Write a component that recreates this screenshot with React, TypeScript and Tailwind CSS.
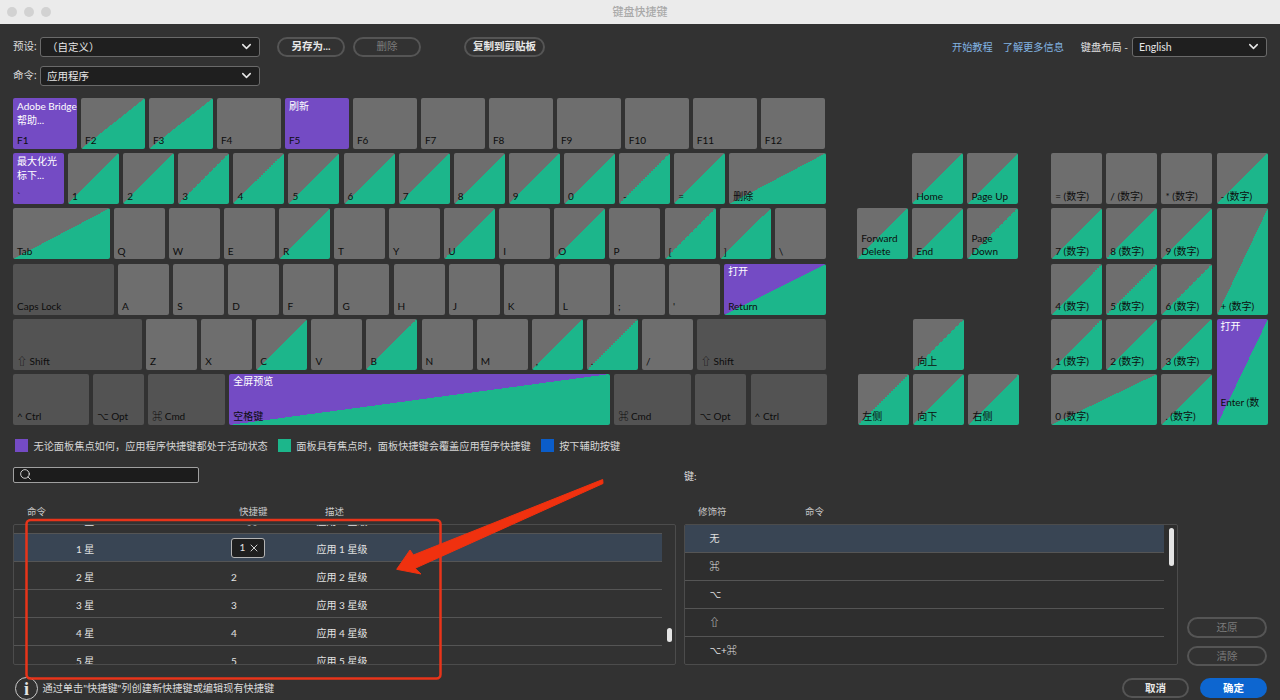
import React from "react";
import { ChevronDown, Search, X } from "lucide-react";

type Kind = "g" | "d" | "p" | "gt" | "pt";
type KeyDef = { l?: React.ReactNode; t?: React.ReactNode; k?: Kind; w?: string; c?: string };

const kinds: Record<Kind, string> = {
  g: "bg-[#6e6e6e]",
  d: "bg-[#535353]",
  p: "bg-[#744bc4]",
  gt: "bg-[linear-gradient(to_bottom_right,#6e6e6e_50%,#1cb68b_50%)]",
  pt: "bg-[linear-gradient(to_bottom_right,#744bc4_50%,#1cb68b_50%)]",
};

function Key({ l, t, k = "g", w = "w-[51px]", c = "" }: KeyDef) {
  return (
    <div className={`flex shrink-0 flex-col justify-between overflow-hidden rounded-[2px] px-[4px] pt-[0.5px] pb-[2px] ${kinds[k]} ${w} ${c}`}>
      <div className="whitespace-nowrap text-[10px] leading-[14px] text-white">{t}</div>
      <div className="whitespace-nowrap text-[10px] leading-[12.6px] text-[#0d0d0d]">{l}</div>
    </div>
  );
}

function Row({ keys, gap = "gap-[4.1px]" }: { keys: KeyDef[]; gap?: string }) {
  return (
    <div className={`flex h-[51px] ${gap}`}>
      {keys.map((d, i) => (
        <Key key={i} {...d} />
      ))}
    </div>
  );
}

const gk = (s: string): KeyDef => ({ l: s, k: "gt" });
const pk = (s: string): KeyDef => ({ l: s });
const FW = "w-[64.3px]";

const row1: KeyDef[] = [
  { t: <>Adobe Bridge<br />帮助...</>, l: "F1", k: "p", w: FW },
  { l: "F2", k: "gt", w: FW },
  { l: "F3", k: "gt", w: FW },
  { l: "F4", w: FW },
  { t: "刷新", l: "F5", k: "p", w: FW },
  { l: "F6", w: FW },
  { l: "F7", w: FW },
  { l: "F8", w: FW },
  { l: "F9", w: FW },
  { l: "F10", w: FW },
  { l: "F11", w: FW },
  { l: "F12", w: FW },
];
const row2: KeyDef[] = [
  { t: <>最大化光<br />标下...</>, l: "`", k: "p" },
  ...["1", "2", "3", "4", "5", "6", "7", "8", "9", "0", "-", "="].map(gk),
  { l: "删除", k: "gt", w: "w-[96.7px]" },
];
const row3: KeyDef[] = [
  { l: "Tab", k: "gt", w: "w-[96.5px]" },
  pk("Q"), pk("W"), pk("E"), gk("R"), pk("T"), pk("Y"), gk("U"), pk("I"), gk("O"), pk("P"), gk("["), gk("]"), pk("\\"),
];
const row4: KeyDef[] = [
  { l: "Caps Lock", k: "d", w: "w-[101px]" },
  ...["A", "S", "D", "F", "G", "H", "J", "K", "L", ";", "'"].map(pk),
  { t: "打开", l: "Return", k: "pt", w: "w-[101.8px]" },
];
const row5: KeyDef[] = [
  { l: "⇧ Shift", k: "d", w: "w-[129px]" },
  pk("Z"), pk("X"), gk("C"), pk("V"), gk("B"), pk("N"), pk("M"), gk(","), gk("."), pk("/"),
  { l: "⇧ Shift", k: "d", w: "w-[129px]" },
];
const row6: KeyDef[] = [
  { l: "^ Ctrl", k: "d", w: "w-[76px]" },
  { l: "⌥ Opt", k: "d" },
  { l: "⌘ Cmd", k: "d", w: "w-[77px]" },
  { t: "全屏预览", l: "空格键", k: "pt", w: "w-[381px]" },
  { l: "⌘ Cmd", k: "d", w: "w-[77px]" },
  { l: "⌥ Opt", k: "d" },
  { l: "^ Ctrl", k: "d", w: "w-[76px]" },
];

function GridKey(d: KeyDef) {
  return <Key {...d} w="w-auto" />;
}

function Select({ text, w }: { text: string; w: string }) {
  return (
    <div className={`flex h-[20.5px] items-center justify-between rounded-[3px] border border-[#6a6a6a] bg-[#1f1f1f] pr-[5px] pl-[6px] text-[10.5px] text-[#e6e6e6] ${w}`}>
      <span className="pt-[2px]">{text}</span>
      <ChevronDown size={15} strokeWidth={2.4} className="text-[#e8e8e8]" />
    </div>
  );
}

function Pill({ text, w, dim }: { text: string; w: string; dim?: boolean }) {
  return (
    <div className={`flex h-[20.5px] items-center justify-center rounded-full border-2 border-[#555555] pt-px text-[10.5px] ${dim ? "text-[#7c7c7c]" : "font-semibold text-[#e8e8e8]"} ${w}`}>
      {text}
    </div>
  );
}

function Legend({ color, text, ml }: { color: string; text: string; ml: string }) {
  return (
    <>
      <div className={`h-[13px] w-[13px] ${color} ${ml}`} />
      <span className="ml-[5.5px] pt-[2px] text-[10.2px] text-[#d6d6d6]">{text}</span>
    </>
  );
}

function LeftRow({ n, s, d, sel, box, sc = "" }: { n: string; s?: string; d: string; sel?: boolean; box?: boolean; sc?: string }) {
  return (
    <div className={`flex h-[28px] shrink-0 items-center border-b border-[#555555] pt-[3px] text-[10px] text-[#e2e2e2] ${sel ? "bg-[#394554]" : ""}`}>
      <span className="w-[217px] pl-[62px]">{n}</span>
      <span className={`w-[85.5px] ${sc}`}>
        {box ? (
          <span className="-mt-[3px] flex h-[20.5px] w-[33.5px] items-center justify-between rounded-[3px] border border-[#b4b4b4] bg-[#1f1f1f] pr-[3.5px] pl-[7.5px]">
            1
            <X size={12} strokeWidth={1.8} />
          </span>
        ) : (
          s
        )}
      </span>
      <span>{d}</span>
    </div>
  );
}

function ModRow({ t, sel }: { t: string; sel?: boolean }) {
  return (
    <div className={`flex h-[28px] shrink-0 items-center border-b border-[#555555] pl-[24.5px] text-[10px] text-[#e2e2e2] ${sel ? "bg-[#394554]" : ""}`}>
      {t}
    </div>
  );
}

export default function App() {
  return (
    <div className="relative h-[700px] w-[1280px] overflow-hidden bg-[#323232] font-['Lato','Noto_Sans_CJK_SC','DejaVu_Sans',sans-serif]">
      {/* title bar */}
      <div className="relative flex h-[24px] items-center justify-center bg-[#ebebeb]">
        <div className="absolute top-[7px] left-[7px] flex gap-[7px]">
          <div className="h-[10px] w-[10px] rounded-full bg-[#d2d2d2]" />
          <div className="h-[10px] w-[10px] rounded-full bg-[#d2d2d2]" />
          <div className="h-[10px] w-[10px] rounded-full bg-[#d2d2d2]" />
        </div>
        <span className="text-[11px] font-medium text-[#a9a9a9]">键盘快捷键</span>
      </div>

      {/* controls */}
      <div className="mt-[12.5px] flex items-center pr-[13px] pl-[13px]">
        <span className="w-[27px] pt-px text-[10.5px] text-[#dcdcdc]">预设:</span>
        <Select text="（自定义）" w="w-[220px]" />
        <Pill text="另存为..." w="w-[68px] ml-[17px]" />
        <Pill text="删除" w="w-[68px] ml-[8px]" dim />
        <Pill text="复制到剪贴板" w="w-[81px] ml-[43px]" />
        <span className="ml-auto pt-px text-[10.2px] text-[#82b4e2]">开始教程</span>
        <span className="ml-[10px] pt-px text-[10.2px] text-[#82b4e2]">了解更多信息</span>
        <span className="ml-[17px] pt-px text-[10.2px] text-[#e0e0e0]">键盘布局 -</span>
        <Select text="English" w="w-[135px] ml-[4px]" />
      </div>
      <div className="mt-[8.5px] flex items-center pl-[13px]">
        <span className="w-[27px] pt-px text-[10.5px] text-[#dcdcdc]">命令:</span>
        <Select text="应用程序" w="w-[220px]" />
      </div>

      {/* keyboard */}
      <div className="mt-[12px] flex pl-[13px]">
        <div className="flex flex-col gap-[4.2px]">
          <Row keys={row1} gap="gap-[3.7px]" />
          <Row keys={row2} />
          <Row keys={row3} />
          <Row keys={row4} />
          <Row keys={row5} />
          <Row keys={row6} />
        </div>
        <div className="ml-[30.7px] grid grid-cols-[repeat(3,51px)] grid-rows-[repeat(6,51px)] gap-x-[4.1px] gap-y-[4.2px]">
          <div className="col-span-3" />
          <div />
          <GridKey l="Home" k="gt" />
          <GridKey l="Page Up" k="gt" />
          <GridKey l={<>Forward<br />Delete</>} k="gt" />
          <GridKey l="End" k="gt" />
          <GridKey l={<>Page<br />Down</>} k="gt" />
          <div className="col-span-3" />
          <div />
          <GridKey l="向上" k="gt" c="ml-px -mr-px" />
          <div />
          <GridKey l="左侧" k="gt" c="ml-px -mr-px" />
          <GridKey l="向下" k="gt" c="ml-px -mr-px" />
          <GridKey l="右侧" k="gt" c="ml-px -mr-px" />
        </div>
        <div className="ml-[32.8px] grid grid-cols-[repeat(4,51px)] grid-rows-[repeat(6,51px)] gap-x-[4.1px] gap-y-[4.2px]">
          <div className="col-span-4" />
          <GridKey l="= (数字)" />
          <GridKey l="/ (数字)" />
          <GridKey l="* (数字)" />
          <GridKey l="- (数字)" k="gt" />
          <GridKey l="7 (数字)" k="gt" />
          <GridKey l="8 (数字)" k="gt" />
          <GridKey l="9 (数字)" k="gt" />
          <GridKey l="+ (数字)" k="gt" c="row-span-2" />
          <GridKey l="4 (数字)" k="gt" />
          <GridKey l="5 (数字)" k="gt" />
          <GridKey l="6 (数字)" k="gt" />
          <GridKey l="1 (数字)" k="gt" />
          <GridKey l="2 (数字)" k="gt" />
          <GridKey l="3 (数字)" k="gt" />
          <GridKey t="打开" l={<span className="mb-[14px] block">Enter (数</span>} k="pt" c="row-span-2" />
          <GridKey l="0 (数字)" k="gt" c="col-span-2" />
          <GridKey l=". (数字)" k="gt" />
        </div>
      </div>

      {/* legend */}
      <div className="mt-[14px] flex h-[13px] items-center">
        <Legend color="bg-[#744bc4]" text="无论面板焦点如何，应用程序快捷键都处于活动状态" ml="ml-[15px]" />
        <Legend color="bg-[#1cb68b]" text="面板具有焦点时，面板快捷键会覆盖应用程序快捷键" ml="ml-[10px]" />
        <Legend color="bg-[#0b5dc9]" text="按下辅助按键" ml="ml-[10px]" />
      </div>

      {/* lower section */}
      <div className="mt-[15px] flex pl-[13px]">
        <div className="w-[662.5px] shrink-0">
          <div className="flex h-[16px] w-[186px] items-center rounded-[2px] border border-[#a0a0a0] bg-[#1c1c1c] pl-[5px]">
            <Search size={13} strokeWidth={1.6} className="text-[#e6e6e6]" />
          </div>
          <div className="mt-[21px] flex h-[14px] items-center pt-[2px] text-[9.5px] text-[#c8c8c8]">
            <span className="ml-[14px] w-[212px]">命令</span>
            <span className="w-[86px]">快捷键</span>
            <span>描述</span>
          </div>
          <div className="mt-[6px] flex h-[141.5px] overflow-hidden rounded-[2px] border border-[#4c4c4c]">
            <div className="flex w-[647.5px] flex-col">
              <div className="-mt-[18.5px] flex flex-col">
                <LeftRow n="0 星" s="⌘+0" d="应用 0 星级" sc="pl-[16px]" />
                <LeftRow n="1 星" d="应用 1 星级" sel box />
                <LeftRow n="2 星" s="2" d="应用 2 星级" />
                <LeftRow n="3 星" s="3" d="应用 3 星级" />
                <LeftRow n="4 星" s="4" d="应用 4 星级" />
                <LeftRow n="5 星" s="5" d="应用 5 星级" />
              </div>
            </div>
            <div className="pt-[103px] pl-[5px]">
              <div className="h-[14px] w-[5px] rounded-full bg-[#e4e4e4]" />
            </div>
          </div>
        </div>

        <div className="ml-[8.5px]">
          <div className="flex h-[16px] items-center pt-[3px] text-[10px] text-[#dcdcdc]">键:</div>
          <div className="mt-[21px] flex h-[14px] items-center pt-[2px] pl-[14px] text-[9.5px] text-[#c8c8c8]">
            <span className="w-[107px]">修饰符</span>
            <span>命令</span>
          </div>
          <div className="mt-[6px] flex items-end">
            <div className="flex h-[141.5px] w-[493.5px] overflow-hidden rounded-[2px] border border-[#4c4c4c] bg-[#2e2e2e]">
              <div className="flex w-[479px] flex-col">
                <ModRow t="无" sel />
                <ModRow t="⌘" />
                <ModRow t="⌥" />
                <ModRow t="⇧" />
                <ModRow t="⌥+⌘" />
              </div>
              <div className="pt-[3px] pl-[5px]">
                <div className="h-[38px] w-[5px] rounded-full bg-[#e4e4e4]" />
              </div>
            </div>
            <div className="-mb-px ml-[9.5px] flex flex-col gap-[8px]">
              <Pill text="还原" w="w-[80px]" dim />
              <Pill text="清除" w="w-[80px]" dim />
            </div>
          </div>
        </div>
      </div>

      {/* footer */}
      <div className="mt-[12px] flex items-start pr-[13px] pl-[15px]">
        <div className="flex h-[23px] w-[23px] items-center justify-center rounded-full border-[1.5px] border-[#c8c8c8] font-['Liberation_Serif',serif] text-[18px] leading-none font-bold text-[#e4e4e4]">
          i
        </div>
        <span className="mt-[4px] ml-[4.5px] text-[10.2px] text-[#dcdcdc]">通过单击"快捷键"列创建新快捷键或编辑现有快捷键</span>
        <div className="mt-[1px] ml-auto flex gap-[11px]">
          <div className="flex h-[20px] w-[67px] items-center justify-center rounded-full border-2 border-[#555555] text-[10.5px] font-semibold text-[#e8e8e8]">取消</div>
          <div className="flex h-[20px] w-[67px] items-center justify-center rounded-full bg-[#0d66d0] text-[10.5px] font-semibold text-white">确定</div>
        </div>
      </div>

      {/* red annotation over the page */}
      <svg className="pointer-events-none absolute inset-0" width="1280" height="700" viewBox="0 0 1280 700">
        <rect x="26.5" y="520" width="414" height="158.5" rx="4" fill="none" stroke="#e8341a" strokeWidth="2.5" />
        <polygon points="602.7,479.5 603,483.5 415,568.3 421,574 396.7,569.3 410,550 413.3,555" fill="#f0310f" stroke="#f0310f" strokeWidth="1" strokeLinejoin="round" />
      </svg>
    </div>
  );
}
